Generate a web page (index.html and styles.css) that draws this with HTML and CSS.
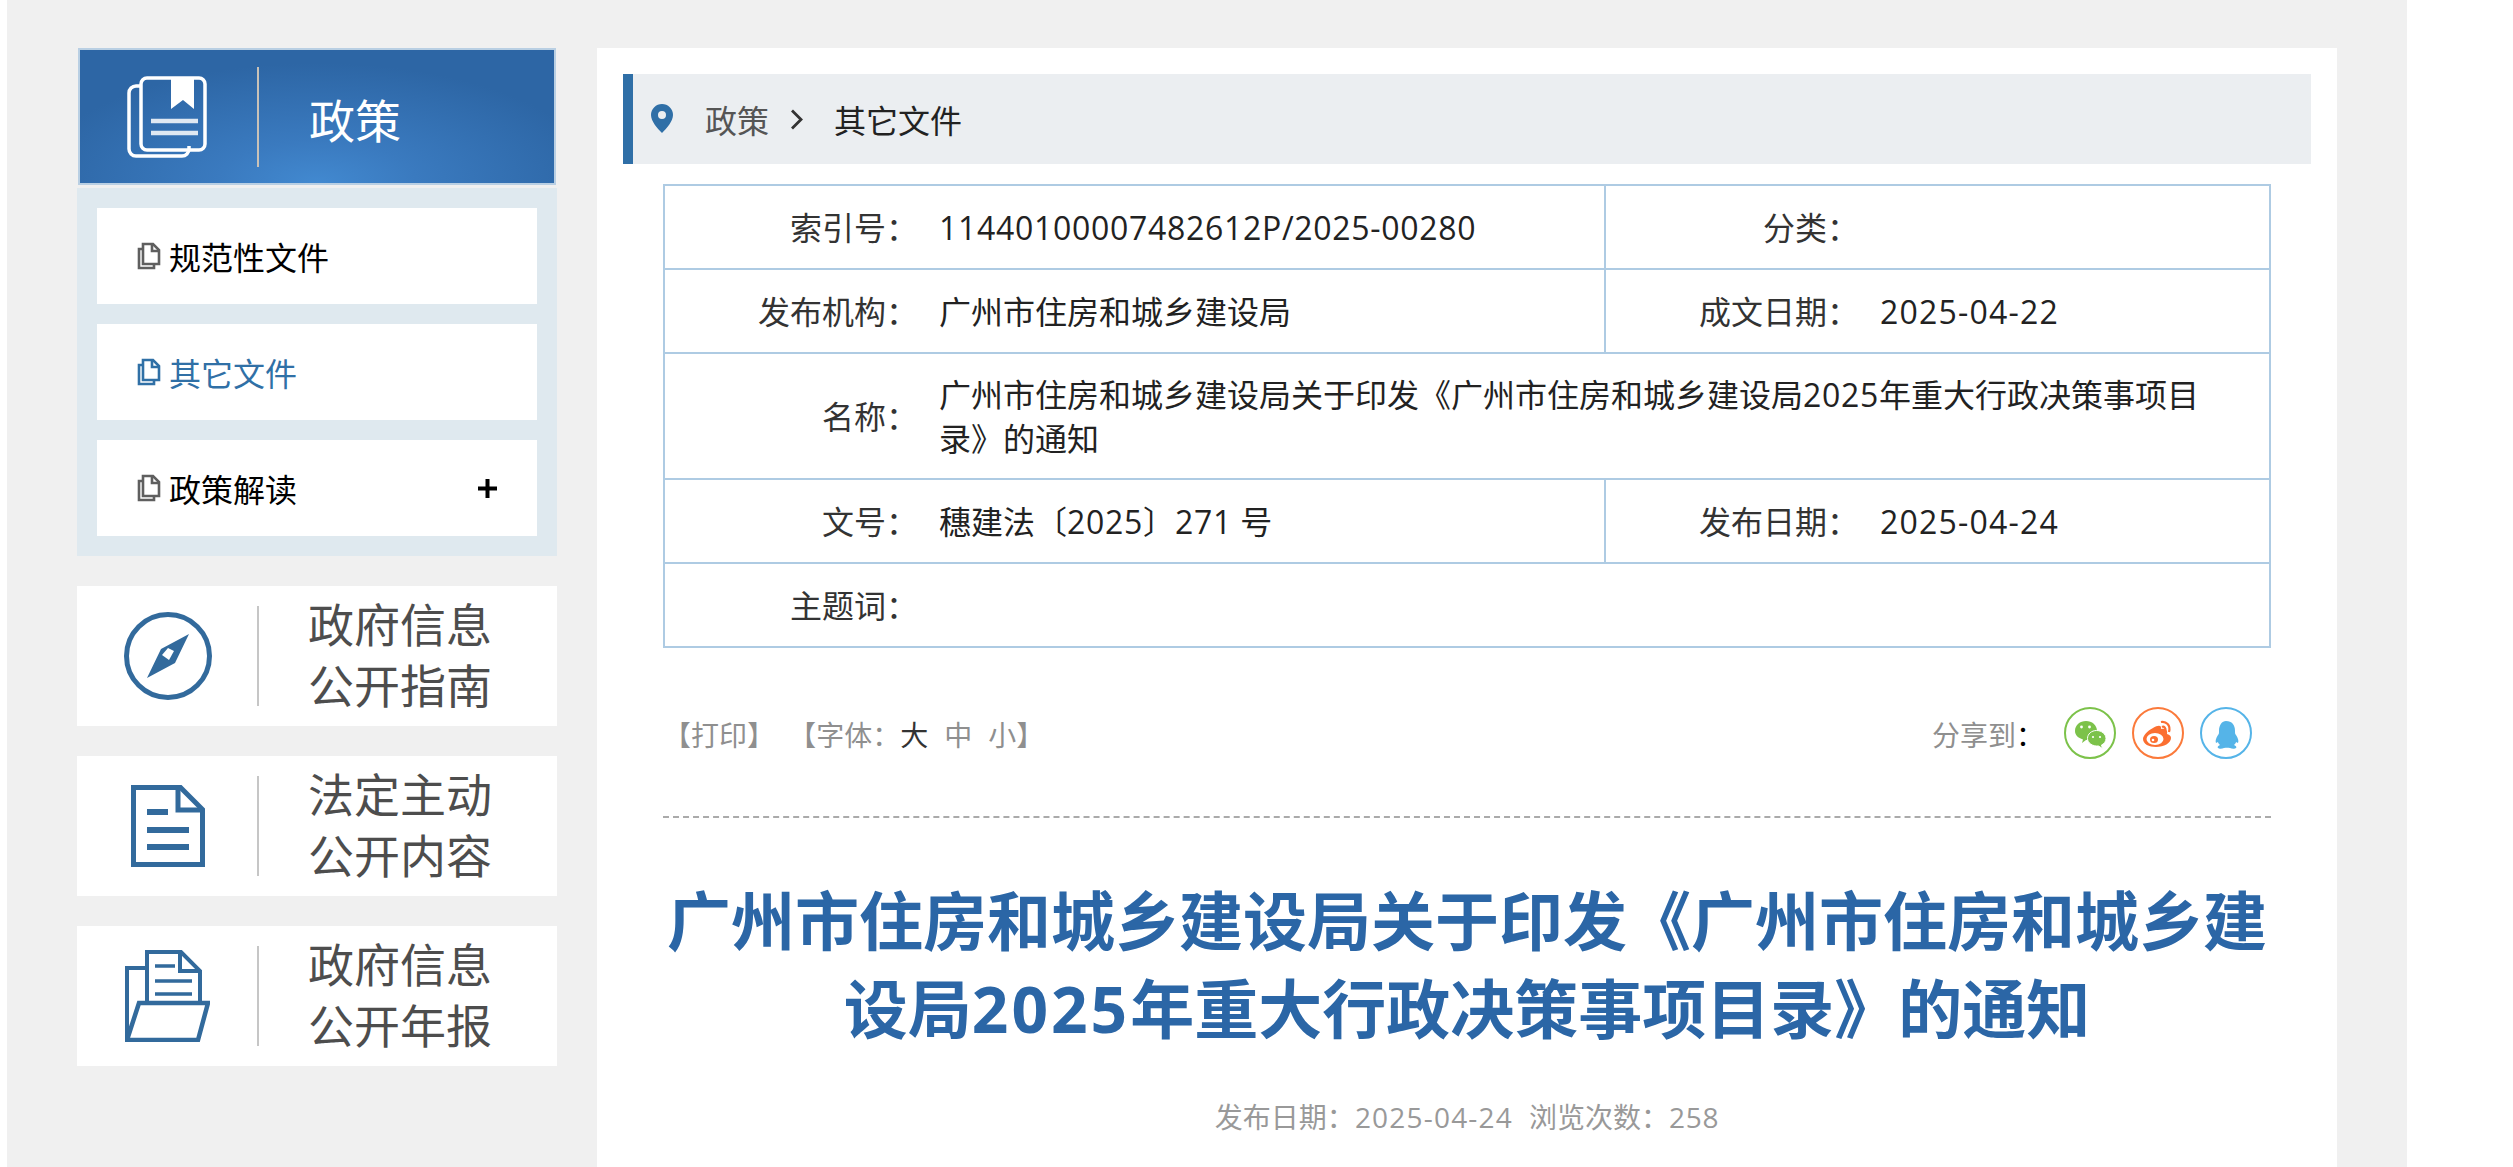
FILE: index.html
```html
<!DOCTYPE html>
<html lang="zh-CN">
<head>
<meta charset="utf-8">
<title>广州市住房和城乡建设局</title>
<link rel="stylesheet" href="styles.css">
</head>
<body>
<div class="page">
  <aside class="side">
    <div class="side-head">
      <svg class="head-icon" viewBox="0 0 80 82" fill="none" stroke="#fff" stroke-width="3.5">
        <path d="M13 10H9a7 7 0 0 0-7 7v56a7 7 0 0 0 7 7h46a7 7 0 0 0 7-7v-3"/>
        <rect x="14" y="2" width="64" height="72" rx="6"/>
        <path d="M44 3h23v30l-11-9-12 9z" fill="#fff" stroke="none"/>
        <path d="M24 45h47M24 57h47" stroke-width="4.5" stroke="#dfe8f2"/>
      </svg>
      <span class="divider head-divider"></span>
      <span class="head-title">政策</span>
    </div>
    <nav class="side-panel">
      <a class="side-item">
        <svg class="item-icon" viewBox="0 0 24 28" fill="none" stroke="currentColor" stroke-width="2.6"><path d="M6 7H2v19h15v-4"/><path d="M6 2h10l6 6v14H6z" fill="#fff"/><path d="M15 2v7h7"/></svg>
        <span>规范性文件</span>
      </a>
      <a class="side-item side-item-active">
        <svg class="item-icon" viewBox="0 0 24 28" fill="none" stroke="currentColor" stroke-width="2.6"><path d="M6 7H2v19h15v-4"/><path d="M6 2h10l6 6v14H6z" fill="#fff"/><path d="M15 2v7h7"/></svg>
        <span>其它文件</span>
      </a>
      <a class="side-item">
        <svg class="item-icon" viewBox="0 0 24 28" fill="none" stroke="currentColor" stroke-width="2.6"><path d="M6 7H2v19h15v-4"/><path d="M6 2h10l6 6v14H6z" fill="#fff"/><path d="M15 2v7h7"/></svg>
        <span>政策解读</span>
        <svg class="plus" viewBox="0 0 19 19"><path d="M9.500 0v19M0 9.500h19" stroke="#000" stroke-width="4"/></svg>
      </a>
    </nav>
    <a class="side-card">
      <span class="card-icon">
        <svg width="88" height="88" viewBox="0 0 88 88" fill="none" stroke="#326a9c" stroke-width="5">
          <circle cx="44" cy="44" r="41.500"/>
          <path d="M65 22 37 37l-14 29 28-15zM37 37l14 14" fill="#326a9c" stroke="none"/>
          <path d="M38 43l6-7 6 3-5 9z" fill="#fff" stroke="none"/>
        </svg>
      </span>
      <span class="divider"></span>
      <span class="card-text">政府信息<br>公开指南</span>
    </a>
    <a class="side-card">
      <span class="card-icon">
        <svg width="74" height="82" viewBox="0 0 74 82" fill="none" stroke="#326a9c" stroke-width="5">
          <path d="M2.500 2.500h47l22 22v55h-69z"/>
          <path d="M47 3v22h25"/>
          <path d="M16 27h21M16 45h42M16 62h42" stroke-width="6"/>
        </svg>
      </span>
      <span class="divider"></span>
      <span class="card-text">法定主动<br>公开内容</span>
    </a>
    <a class="side-card">
      <span class="card-icon">
        <svg width="85" height="92" viewBox="0 0 85 92" fill="none" stroke="#326a9c" stroke-width="4">
          <path d="M22 18H2v72"/>
          <path d="M22 52V2h34l19 19v31"/>
          <path d="M55 3v18h20"/>
          <path d="M30 16h20M30 31h37M30 44h37" stroke-width="3.500"/>
          <path d="M14 53h69l-10 37H2z" stroke-width="4.500"/>
        </svg>
      </span>
      <span class="divider"></span>
      <span class="card-text">政府信息<br>公开年报</span>
    </a>
  </aside>

  <main class="main">
    <div class="crumb">
      <svg class="crumb-pin" viewBox="0 0 22 29"><path fill-rule="evenodd" fill="#2f6fa7" d="M11 0a11 11 0 0 1 11 11c0 6-6 13-11 18C6 24 0 17 0 11A11 11 0 0 1 11 0zm0 7a4 4 0 1 0 0 8 4 4 0 0 0 0-8z"/></svg>
      <span class="crumb-link">政策</span>
      <svg class="crumb-sep" viewBox="0 0 13 21" fill="none" stroke="#333" stroke-width="2.800"><path d="M2 1.500l9 9-9 9"/></svg>
      <span class="crumb-current">其它文件</span>
    </div>

    <table class="info">
      <colgroup><col class="c-label"><col class="c-value"><col class="c-label"><col></colgroup>
      <tr class="row">
        <th>索引号：</th><td class="num">11440100007482612P/2025-00280</td>
        <th>分类：</th><td></td>
      </tr>
      <tr class="row">
        <th>发布机构：</th><td>广州市住房和城乡建设局</td>
        <th>成文日期：</th><td class="date">2025-04-22</td>
      </tr>
      <tr class="row row-tall">
        <th>名称：</th>
        <td colspan="3" class="name-cell">广州市住房和城乡建设局关于印发《广州市住房和城乡建设局<span class="num">2025</span>年重大行政决策事项目录》的通知</td>
      </tr>
      <tr class="row">
        <th>文号：</th><td>穗建法〔<span class="num">2025</span>〕<span class="num">271</span> 号</td>
        <th>发布日期：</th><td class="date">2025-04-24</td>
      </tr>
      <tr class="row">
        <th>主题词：</th><td colspan="3"></td>
      </tr>
    </table>

    <div class="tools">
      <div class="tool-links">
        <span>【打印】</span>
        <span class="font-set">【字体：<b class="size size-on">大</b><b class="size">中</b><b class="size">小</b>】</span>
      </div>
      <div class="share">
        <span class="share-label">分享到<i>：</i></span>
        <svg class="share-icon" viewBox="0 0 52 52">
          <circle cx="26" cy="26" r="25" fill="none" stroke="#7cc24a" stroke-width="2"/>
          <path fill="#7cc24a" d="M22 14c6 0 11 4 11 10s-5 9-11 9l-4 3 1-3.500C14 31 11 28 11 24c0-6 5-10 11-10z"/>
          <path fill="#7cc24a" stroke="#fff" stroke-width="1" d="M32.500 23.500c5 0 9.500 3.500 9.500 8 0 3-2 5.500-4.500 6.500l1 3.500-4-2.500c-6 .5-11-3-11-7.500s4-8 9-8z"/>
          <circle cx="17.500" cy="20" r="1.400" fill="#fff"/><circle cx="25.500" cy="20" r="1.400" fill="#fff"/>
          <circle cx="29" cy="30" r="1.100" fill="#fff"/><circle cx="36" cy="30" r="1.100" fill="#fff"/>
        </svg>
        <svg class="share-icon" viewBox="0 0 52 52">
          <circle cx="26" cy="26" r="25" fill="none" stroke="#fb7a3b" stroke-width="2"/>
          <path fill="#fb6f31" d="M21 21c5-3 9-3 8 1 4-1 7 1 6 5 3 1 4 2 4 4 0 5-7 9-15 9-7 0-13-3-13-8 0-3 4-8 10-11z"/>
          <ellipse cx="23" cy="32" rx="8.500" ry="6" fill="#fff"/>
          <ellipse cx="22" cy="32.500" rx="4" ry="3.500" fill="#fb6f31"/>
          <circle cx="21" cy="33" r="1.300" fill="#fff"/>
          <path fill="none" stroke="#fb6f31" stroke-width="2.200" d="M29 15c5-1 10 3 8 10M30 20c2-1 4 1 3.500 4"/>
        </svg>
        <svg class="share-icon" viewBox="0 0 52 52">
          <circle cx="26" cy="26" r="25" fill="none" stroke="#55b4e8" stroke-width="2"/>
          <path fill="#55b4e8" d="M26 14c6 0 9 4 9 10 0 2 0 3 1 4 2 3 3 6 2 8l-2-1c0 1-1 2-2 3 2 1 3 2 2 3-1 1-4 1-6 0-2-.5-4-.5-6 0-2 1-5 1-6 0-1-1 0-2 2-3-1-1-2-2-2-3l-2 1c-1-2 0-5 2-8 1-1 1-2 1-4 0-6 3-10 7-10z"/>
        </svg>
      </div>
    </div>

    <h1 class="title">广州市住房和城乡建设局关于印发《广州市住房和城乡建设局<span class="title-num">2025</span>年重大行政决策事项目录》的通知</h1>
    <p class="meta">发布日期：<span class="date">2025-04-24</span><span class="meta-gap">浏览次数：</span><span class="num">258</span></p>
  </main>
</div>
</body>
</html>
```

FILE: styles.css
```css
* { box-sizing: border-box; }
html, body { margin: 0; padding: 0; background: #fff; height: 100%; overflow: hidden; }
body { font-family: "Open Sans", "Noto Sans CJK SC", sans-serif; font-size: 32px; color: #222; }

.page {
  display: flex;
  align-items: flex-start;
  width: 2400px;
  height: 1167px;
  margin-left: 7px;
  padding: 48px 0 0 70px;
  background: #f0f0f0;
  overflow: hidden;
}

/* Sidebar */
.side { width: 480px; flex: none; display: flex; flex-direction: column; }
.side-head {
  display: flex;
  align-items: center;
  width: 478px;
  height: 137px;
  margin-left: 1px;
  border: 2px solid #b9cfe3;
  background: radial-gradient(ellipse 60% 90% at 50% 100%, #4289d0 0, #3a7abf 35%, #2d66a5 100%);
  padding-left: 47px;
}
.head-icon { width: 80px; height: 82px; flex: none; }
.divider { flex: none; width: 2px; height: 100px; background: #c6c6c6; }
.head-divider { background: #c9c2b8; margin-left: 50px; }
.head-title { margin: 6px 0 0 50px; font-size: 46px; color: #fff; line-height: 1; }

.side-panel {
  display: flex;
  flex-direction: column;
  gap: 20px;
  margin-top: 3px;
  padding: 20px;
  background: #dfe9ef;
}
.side-item {
  display: flex;
  align-items: center;
  height: 96px;
  padding-left: 40px;
  background: #fff;
  color: #000;
}
.side-item .item-icon { color: #5f5f5f; }
.side-item-active, .side-item-active .item-icon { color: #3070a6; }
.item-icon { width: 24px; height: 28px; flex: none; margin-right: 8px; }
.plus { width: 19px; height: 19px; margin-left: auto; margin-right: 40px; flex: none; }

.side-card {
  display: flex;
  align-items: center;
  height: 140px;
  margin-top: 30px;
  background: #fff;
}
.card-icon { width: 180px; flex: none; display: flex; justify-content: center; padding-left: 1px; }
.card-text { margin: -3px 0 0 49px; font-size: 46px; line-height: 61px; color: #4d4d4d; }

/* Main */
.main {
  width: 1740px;
  flex: none;
  height: 1119px;
  margin-left: 40px;
  padding: 26px 26px 0;
  background: #fff;
}
.crumb {
  display: flex;
  align-items: center;
  height: 90px;
  padding-left: 18px;
  border-left: 10px solid #2f6fa7;
  background: #ebeef1;
}
.crumb-pin { width: 22px; height: 29px; flex: none; margin-top: -2px; }
.crumb-link { margin-left: 32px; color: #555; }
.crumb-sep { width: 13px; height: 21px; margin-left: 21px; flex: none; }
.crumb-current { margin-left: 31px; color: #222; }

.info {
  width: 1608px;
  margin: 20px 0 0 40px;
  border-collapse: collapse;
  table-layout: fixed;
  border: 2px solid #aecbe3;
}
.c-label { width: 257px; }
.c-value { width: 684px; }
.info th, .info td { border-top: 2px solid #aecbe3; border-bottom: 2px solid #aecbe3; padding: 2px 0 0; font-weight: 400; color: #222; line-height: 44px; }
.info th { text-align: right; color: #333; padding-right: 3px; }
.info td { padding-left: 18px; }
.info td:nth-child(2) { border-right: 2px solid #aecbe3; }
.info td[colspan] { border-right: 0; }
.row { height: 84px; }
.row-tall { height: 126px; }
.info td.name-cell { padding-right: 50px; }
.num { letter-spacing: .7px; }
.date { letter-spacing: 1.200px; }

.tools {
  display: flex;
  align-items: center;
  justify-content: space-between;
  width: 1608px;
  height: 170px;
  margin-left: 40px;
  padding: 60px 19px 58px 0;
  border-bottom: 2px dashed #aaa;
  font-size: 28px;
  color: #8f8f8f;
}
.tool-links { padding-top: 2px; }
.font-set { margin-left: 6px; }
.size { font-weight: 400; margin-right: 16px; }
.size:last-child { margin-right: 0; }
.size-on { color: #333; }
.share { display: flex; align-items: center; gap: 16px; }
.share-label { margin-right: 4px; padding-top: 2px; }
.share-label i { font-style: normal; color: #000; }
.share-icon { width: 52px; height: 52px; flex: none; }

.title {
  width: 1608px;
  margin: 59px 0 0 40px;
  font-size: 64px;
  line-height: 88px;
  font-weight: 700;
  text-align: center;
  color: #2b66a6;
}
.title-num { letter-spacing: 3px; }
.meta {
  margin: 42px 0 0 40px;
  width: 1608px;
  font-size: 28px;
  line-height: 44px;
  text-align: center;
  color: #999;
}
.meta-gap { margin-left: 16px; }
```
